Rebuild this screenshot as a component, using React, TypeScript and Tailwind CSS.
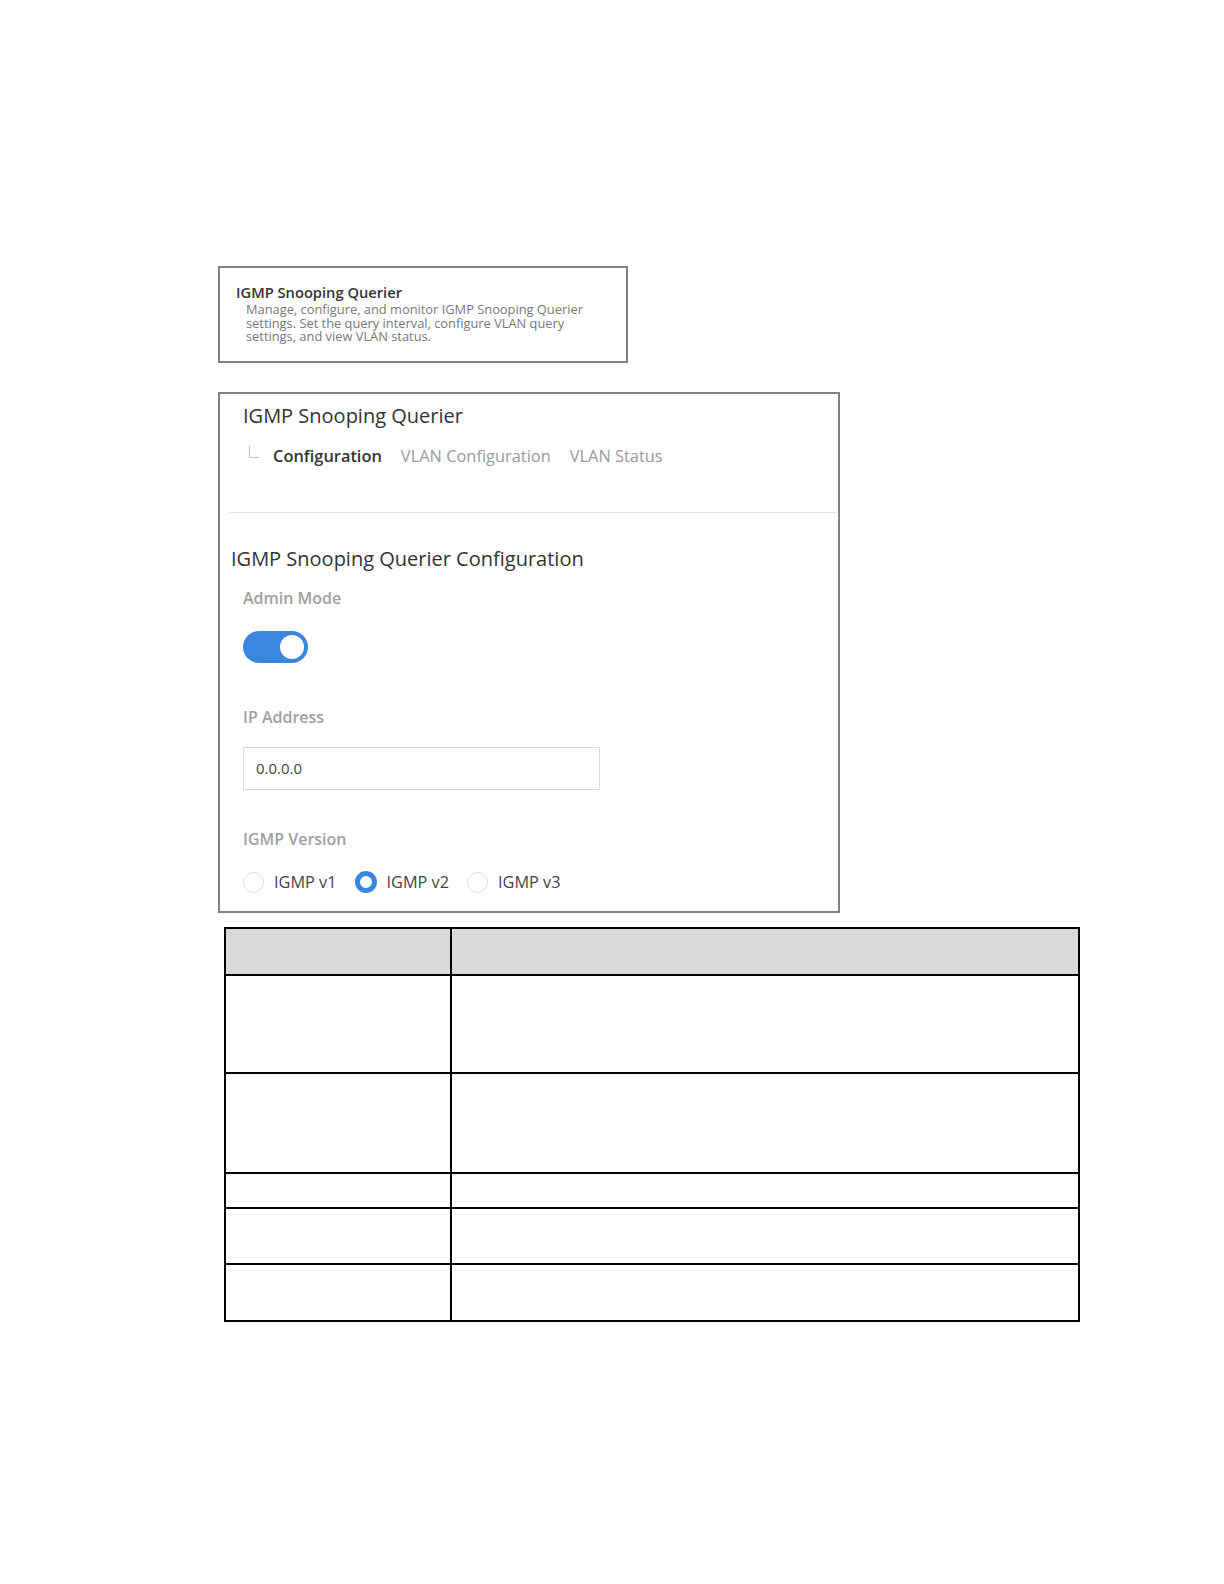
import React from 'react'

const font = { fontFamily: '"Open Sans", "Noto Sans", sans-serif' }

function Radio({ label, checked }: { label: string; checked?: boolean }) {
  return (
    <label className="flex items-center">
      {checked ? (
        <span className="w-[22px] h-[22px] rounded-full border-[5px] border-[#3a86e0] bg-white" />
      ) : (
        <span className="w-[21px] h-[21px] rounded-full border border-[#dcdcdc] bg-white" />
      )}
      <span className="ml-[10px] text-[16.3px] text-[#444] leading-6">{label}</span>
    </label>
  )
}

export default function App() {
  const rows = [98, 100, 35, 56, 57]

  return (
    <div className="min-h-[1584px] bg-white pt-[266px] pl-[218px]" style={font}>
      {/* Summary card */}
      <div className="w-[410px] h-[97px] border-2 border-[#828282] pt-[15px] pl-[16px]">
        <div className="text-[14.7px] font-semibold text-[#333] leading-[18px]">IGMP Snooping Querier</div>
        <p className="ml-[10px] mt-[2px] text-[12.85px] text-[#777] leading-[13.5px] w-[360px]">
          Manage, configure, and monitor IGMP Snooping Querier settings. Set the query interval, configure VLAN query settings, and view VLAN status.
        </p>
      </div>

      {/* Config panel */}
      <div className="mt-[29px] w-[622px] border-2 border-[#828282] pb-[17px]">
        <div className="pl-[23px] pt-[8px]">
          <h1 className="text-[20px] leading-7 text-[#333]">IGMP Snooping Querier</h1>
          <div className="mt-[14px] flex items-center h-6">
            <span className="ml-[6px] mb-[8px] w-[10px] h-[12px] border-l border-b border-[#bbb]" />
            <span className="ml-[14px] text-[16.4px] font-semibold text-[#333]">Configuration</span>
            <span className="ml-[19px] text-[16.4px] text-[#9a9a9a]">VLAN Configuration</span>
            <span className="ml-[19px] text-[16.4px] text-[#9a9a9a]">VLAN Status</span>
          </div>
        </div>
        <div className="ml-[10px] mt-[44px] border-t border-[#e6e6e6]" />

        <div className="pl-[11px]">
          <h2 className="mt-[32px] text-[20px] leading-7 text-[#333]">IGMP Snooping Querier Configuration</h2>
          <div className="pl-[12px]">
            <div className="mt-[13px] text-[16px] leading-6 font-semibold text-[#a0a0a0]">Admin Mode</div>
            <div className="mt-[21px] w-[65px] h-[32px] rounded-full bg-[#3a86e0] flex items-center justify-end pr-[2px]">
              <span className="w-[28px] h-[28px] rounded-full bg-white border-2 border-[#3a86e0]" />
            </div>

            <div className="mt-[42px] text-[16px] leading-6 font-semibold text-[#a0a0a0]">IP Address</div>
            <div className="mt-[18px] w-[357px] h-[43px] border border-[#dcdcdc] flex items-center pl-[12px] text-[15px] text-[#444]">
              0.0.0.0
            </div>

            <div className="mt-[37px] text-[16px] leading-6 font-semibold text-[#a0a0a0]">IGMP Version</div>
            <div className="mt-[19px] flex items-center gap-[18px] h-6">
              <Radio label="IGMP v1" />
              <Radio label="IGMP v2" checked />
              <Radio label="IGMP v3" />
            </div>
          </div>
        </div>
      </div>

      {/* Parameter table */}
      <table className="mt-[14px] ml-[6px] w-[856px] border-collapse border-2 border-black">
        <tbody>
          <tr className="h-[47px] bg-[#d9d9d9]">
            <td className="w-[226px] border-2 border-black" />
            <td className="border-2 border-black" />
          </tr>
          {rows.map((h, i) => (
            <tr key={i} style={{ height: h }}>
              <td className="border-2 border-black" />
              <td className="border-2 border-black" />
            </tr>
          ))}
        </tbody>
      </table>
    </div>
  )
}
